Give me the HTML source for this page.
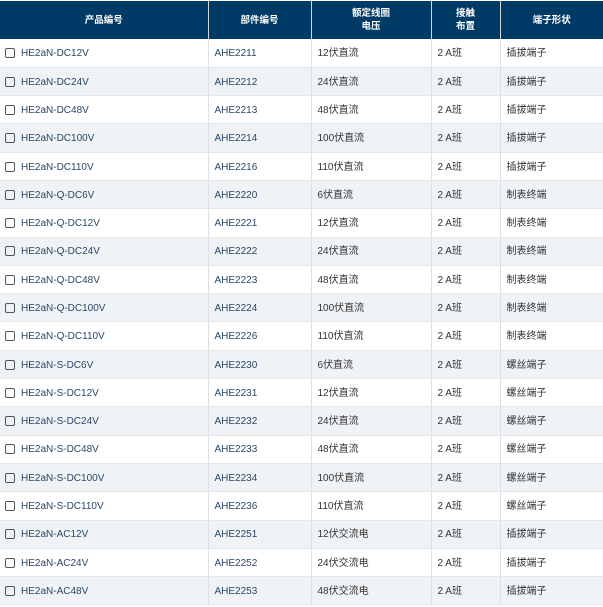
<!DOCTYPE html>
<html><head><meta charset="utf-8"><style>
body{margin:0;width:603px;height:607px;overflow:hidden;background:#fff;font-family:"Liberation Sans","Noto Sans CJK SC",sans-serif;font-size:10px;}
table{border-collapse:collapse;width:603px;table-layout:fixed;position:absolute;top:1px;left:0}
th{background:#003a66;color:#fff;font-weight:bold;height:38px;border-right:1px solid #d0d7de;font-size:9.5px;line-height:13px;padding:0;vertical-align:middle}
td{height:28.3px;padding:3px 0 0 6px;border-right:1px solid #dde1e5;border-bottom:1px solid #e3e6ea;color:#333;box-sizing:border-box;vertical-align:middle;line-height:12px;white-space:nowrap}
td span.t{display:inline-block;vertical-align:middle;line-height:12px;height:12px}
tr:nth-child(even) td{background:#f0f3f6}
td.p{color:#2a4766;padding-left:5px}
td.a{color:#2a4766}
.cb{display:inline-block;width:8px;height:8px;border:1.3px solid #555;border-radius:2px;vertical-align:middle;margin-right:6px;position:relative;top:-1px}
th:last-child,td:last-child{border-right:none}
</style></head><body>
<table>
<colgroup><col style="width:208px"><col style="width:103px"><col style="width:120px"><col style="width:69px"><col style="width:103px"></colgroup>
<thead><tr><th>产品编号</th><th>部件编号</th><th>额定线圈<br>电压</th><th>接触<br>布置</th><th>端子形状</th></tr></thead>
<tbody>
<tr><td class="p"><span class="cb"></span><span class="t">HE2aN-DC12V</span></td><td class="a"><span class="t">AHE2211</span></td><td><span class="t">12伏直流</span></td><td><span class="t">2 A班</span></td><td><span class="t">插拔端子</span></td></tr>
<tr><td class="p"><span class="cb"></span><span class="t">HE2aN-DC24V</span></td><td class="a"><span class="t">AHE2212</span></td><td><span class="t">24伏直流</span></td><td><span class="t">2 A班</span></td><td><span class="t">插拔端子</span></td></tr>
<tr><td class="p"><span class="cb"></span><span class="t">HE2aN-DC48V</span></td><td class="a"><span class="t">AHE2213</span></td><td><span class="t">48伏直流</span></td><td><span class="t">2 A班</span></td><td><span class="t">插拔端子</span></td></tr>
<tr><td class="p"><span class="cb"></span><span class="t">HE2aN-DC100V</span></td><td class="a"><span class="t">AHE2214</span></td><td><span class="t">100伏直流</span></td><td><span class="t">2 A班</span></td><td><span class="t">插拔端子</span></td></tr>
<tr><td class="p"><span class="cb"></span><span class="t">HE2aN-DC110V</span></td><td class="a"><span class="t">AHE2216</span></td><td><span class="t">110伏直流</span></td><td><span class="t">2 A班</span></td><td><span class="t">插拔端子</span></td></tr>
<tr><td class="p"><span class="cb"></span><span class="t">HE2aN-Q-DC6V</span></td><td class="a"><span class="t">AHE2220</span></td><td><span class="t">6伏直流</span></td><td><span class="t">2 A班</span></td><td><span class="t">制表终端</span></td></tr>
<tr><td class="p"><span class="cb"></span><span class="t">HE2aN-Q-DC12V</span></td><td class="a"><span class="t">AHE2221</span></td><td><span class="t">12伏直流</span></td><td><span class="t">2 A班</span></td><td><span class="t">制表终端</span></td></tr>
<tr><td class="p"><span class="cb"></span><span class="t">HE2aN-Q-DC24V</span></td><td class="a"><span class="t">AHE2222</span></td><td><span class="t">24伏直流</span></td><td><span class="t">2 A班</span></td><td><span class="t">制表终端</span></td></tr>
<tr><td class="p"><span class="cb"></span><span class="t">HE2aN-Q-DC48V</span></td><td class="a"><span class="t">AHE2223</span></td><td><span class="t">48伏直流</span></td><td><span class="t">2 A班</span></td><td><span class="t">制表终端</span></td></tr>
<tr><td class="p"><span class="cb"></span><span class="t">HE2aN-Q-DC100V</span></td><td class="a"><span class="t">AHE2224</span></td><td><span class="t">100伏直流</span></td><td><span class="t">2 A班</span></td><td><span class="t">制表终端</span></td></tr>
<tr><td class="p"><span class="cb"></span><span class="t">HE2aN-Q-DC110V</span></td><td class="a"><span class="t">AHE2226</span></td><td><span class="t">110伏直流</span></td><td><span class="t">2 A班</span></td><td><span class="t">制表终端</span></td></tr>
<tr><td class="p"><span class="cb"></span><span class="t">HE2aN-S-DC6V</span></td><td class="a"><span class="t">AHE2230</span></td><td><span class="t">6伏直流</span></td><td><span class="t">2 A班</span></td><td><span class="t">螺丝端子</span></td></tr>
<tr><td class="p"><span class="cb"></span><span class="t">HE2aN-S-DC12V</span></td><td class="a"><span class="t">AHE2231</span></td><td><span class="t">12伏直流</span></td><td><span class="t">2 A班</span></td><td><span class="t">螺丝端子</span></td></tr>
<tr><td class="p"><span class="cb"></span><span class="t">HE2aN-S-DC24V</span></td><td class="a"><span class="t">AHE2232</span></td><td><span class="t">24伏直流</span></td><td><span class="t">2 A班</span></td><td><span class="t">螺丝端子</span></td></tr>
<tr><td class="p"><span class="cb"></span><span class="t">HE2aN-S-DC48V</span></td><td class="a"><span class="t">AHE2233</span></td><td><span class="t">48伏直流</span></td><td><span class="t">2 A班</span></td><td><span class="t">螺丝端子</span></td></tr>
<tr><td class="p"><span class="cb"></span><span class="t">HE2aN-S-DC100V</span></td><td class="a"><span class="t">AHE2234</span></td><td><span class="t">100伏直流</span></td><td><span class="t">2 A班</span></td><td><span class="t">螺丝端子</span></td></tr>
<tr><td class="p"><span class="cb"></span><span class="t">HE2aN-S-DC110V</span></td><td class="a"><span class="t">AHE2236</span></td><td><span class="t">110伏直流</span></td><td><span class="t">2 A班</span></td><td><span class="t">螺丝端子</span></td></tr>
<tr><td class="p"><span class="cb"></span><span class="t">HE2aN-AC12V</span></td><td class="a"><span class="t">AHE2251</span></td><td><span class="t">12伏交流电</span></td><td><span class="t">2 A班</span></td><td><span class="t">插拔端子</span></td></tr>
<tr><td class="p"><span class="cb"></span><span class="t">HE2aN-AC24V</span></td><td class="a"><span class="t">AHE2252</span></td><td><span class="t">24伏交流电</span></td><td><span class="t">2 A班</span></td><td><span class="t">插拔端子</span></td></tr>
<tr><td class="p"><span class="cb"></span><span class="t">HE2aN-AC48V</span></td><td class="a"><span class="t">AHE2253</span></td><td><span class="t">48伏交流电</span></td><td><span class="t">2 A班</span></td><td><span class="t">插拔端子</span></td></tr>
</tbody></table>
</body></html>
